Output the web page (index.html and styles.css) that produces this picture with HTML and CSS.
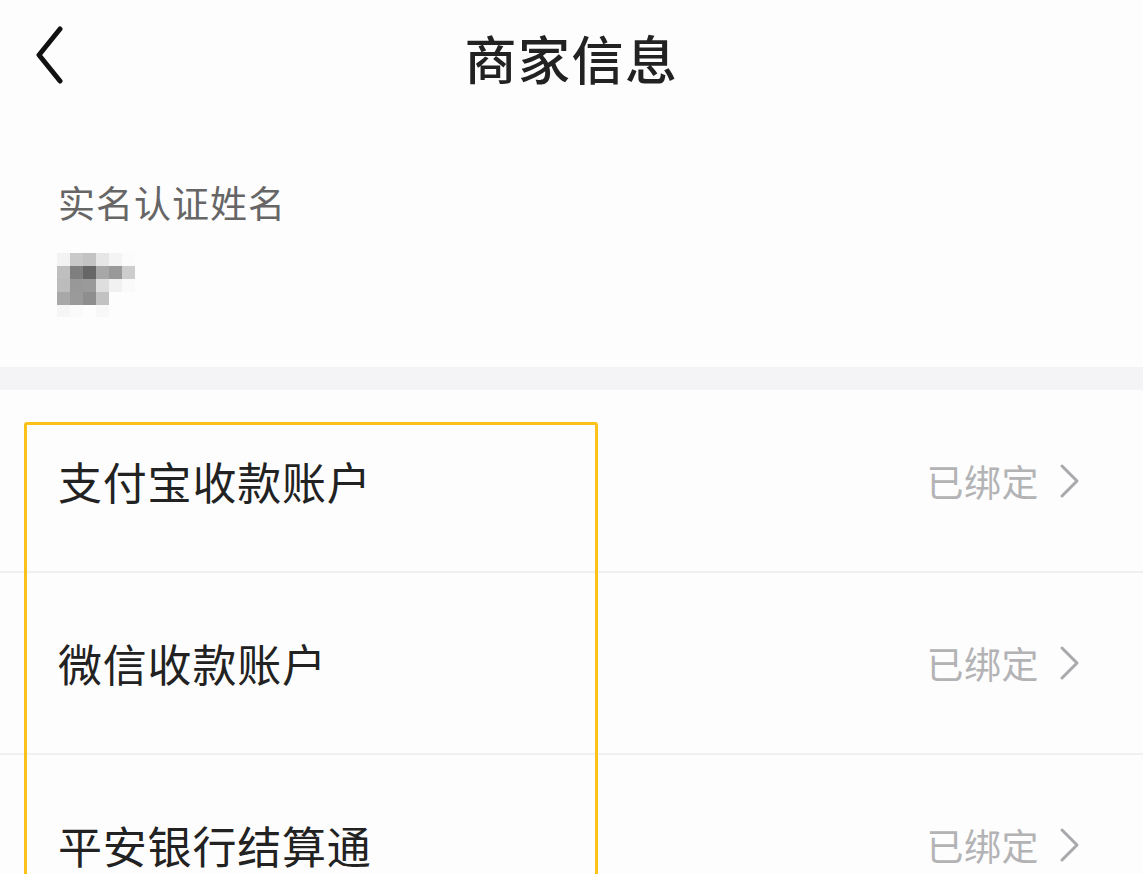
FILE: index.html
```html
<!DOCTYPE html>
<html lang="zh-CN">
<head>
<meta charset="utf-8">
<title>商家信息</title>
<link rel="stylesheet" href="styles.css">
</head>
<body>
<div class="page">
  <header class="nav">
    <svg class="back" width="32" height="60" viewBox="0 0 32 60"><path d="M26 3 L5 29 L26 55" fill="none" stroke="#111" stroke-width="5" stroke-linecap="round" stroke-linejoin="round"/></svg>
    <h1 class="title">商家信息</h1>
  </header>

  <section class="info">
    <div class="info-label">实名认证姓名</div>
    <svg class="blur" width="90" height="64" viewBox="0 0 90 64">
      <rect x="0" y="0" width="13" height="13" fill="#f3f3f3"/>
      <rect x="13" y="0" width="13" height="13" fill="#c9c9c9"/>
      <rect x="26" y="0" width="13" height="13" fill="#c3c3c3"/>
      <rect x="39" y="0" width="13" height="13" fill="#e6e6e6"/>
      <rect x="52" y="0" width="13" height="13" fill="#f4f4f4"/>
      <rect x="65" y="0" width="13" height="13" fill="#fbfbfb"/>
      <rect x="0" y="13" width="13" height="13" fill="#bfbfbf"/>
      <rect x="13" y="13" width="13" height="13" fill="#7f7f7f"/>
      <rect x="26" y="13" width="13" height="13" fill="#666666"/>
      <rect x="39" y="13" width="13" height="13" fill="#a7a7a7"/>
      <rect x="52" y="13" width="13" height="13" fill="#999999"/>
      <rect x="65" y="13" width="13" height="13" fill="#cdcdcd"/>
      <rect x="0" y="26" width="13" height="13" fill="#bcbcbc"/>
      <rect x="13" y="26" width="13" height="13" fill="#989898"/>
      <rect x="26" y="26" width="13" height="13" fill="#9a9a9a"/>
      <rect x="39" y="26" width="13" height="13" fill="#dedede"/>
      <rect x="52" y="26" width="13" height="13" fill="#f1f1f1"/>
      <rect x="65" y="26" width="13" height="13" fill="#fafafa"/>
      <rect x="0" y="39" width="13" height="13" fill="#a8a8a8"/>
      <rect x="13" y="39" width="13" height="13" fill="#9a9a9a"/>
      <rect x="26" y="39" width="13" height="13" fill="#8e8e8e"/>
      <rect x="39" y="39" width="13" height="13" fill="#c2c2c2"/>
      <rect x="0" y="52" width="13" height="12" fill="#f6f6f6"/>
      <rect x="13" y="52" width="13" height="12" fill="#fafafa"/>
      <rect x="39" y="52" width="13" height="12" fill="#f8f8f8"/>
    </svg>
  </section>

  <div class="band"></div>

  <ul class="list">
    <li class="row">
      <span class="row-label">支付宝收款账户</span>
      <span class="row-status">已绑定</span>
      <svg class="chev" width="22" height="36" viewBox="0 0 22 36"><path d="M3 3 L18 18 L3 33" fill="none" stroke="#a9a9ad" stroke-width="3" stroke-linecap="round" stroke-linejoin="round"/></svg>
    </li>
    <li class="row">
      <span class="row-label">微信收款账户</span>
      <span class="row-status">已绑定</span>
      <svg class="chev" width="22" height="36" viewBox="0 0 22 36"><path d="M3 3 L18 18 L3 33" fill="none" stroke="#a9a9ad" stroke-width="3" stroke-linecap="round" stroke-linejoin="round"/></svg>
    </li>
    <li class="row row-last">
      <span class="row-label">平安银行结算通</span>
      <span class="row-status">已绑定</span>
      <svg class="chev" width="22" height="36" viewBox="0 0 22 36"><path d="M3 3 L18 18 L3 33" fill="none" stroke="#a9a9ad" stroke-width="3" stroke-linecap="round" stroke-linejoin="round"/></svg>
    </li>
  </ul>

  <div class="highlight"></div>
</div>
</body>
</html>
```

FILE: styles.css
```css
* { box-sizing: border-box; }

html, body {
  margin: 0;
  padding: 0;
  background: #ffffff;
}

body {
  font-family: "Noto Sans CJK SC", "Noto Sans", sans-serif;
  color: #222222;
  overflow: hidden;
}

.page {
  position: relative;
  width: 1143px;
  height: 874px;
  overflow: hidden;
  background: #fdfdfd;
}

.nav {
  position: relative;
  height: 116px;
  display: flex;
  align-items: center;
  justify-content: center;
}

.back {
  position: absolute;
  left: 34px;
  top: 26px;
}

.title {
  margin: 0;
  font-size: 52px;
  font-weight: 500;
  line-height: 60px;
  color: #222222;
  letter-spacing: 1.5px;
}

.info {
  padding: 64px 0 0 58px;
  height: 251px;
  display: flex;
  flex-direction: column;
}

.info-label {
  font-size: 37px;
  line-height: 44px;
  color: #666666;
  letter-spacing: 1px;
}

.blur {
  display: block;
  margin-top: 29px;
  margin-left: -1px;
}

.band {
  height: 23px;
  background: #f4f4f7;
}

.list {
  list-style: none;
  margin: 0;
  padding: 0;
}

.row {
  height: 182px;
  display: flex;
  align-items: center;
  padding: 0 62px 0 58px;
  border-bottom: 2px solid #f0f0f2;
}

.row:first-child {
  height: 183px;
}

.row-last {
  height: 119px;
  align-items: flex-start;
  padding-top: 66px;
  border-bottom: 0;
}

.row-label {
  flex: 1;
  font-size: 44px;
  line-height: 48px;
  color: #222222;
  letter-spacing: 0.8px;
}

.row-status {
  font-size: 37px;
  line-height: 44px;
  color: #b3b3b6;
  margin-right: 20px;
  letter-spacing: 0.5px;
}

.row-last .row-status {
  margin-top: 2px;
}

.row-last .chev {
  margin-top: 6px;
}

.chev {
  display: block;
}

.highlight {
  position: absolute;
  left: 24px;
  top: 422px;
  width: 574px;
  height: 600px;
  border: 3px solid #fdc21a;
  border-radius: 3px;
  pointer-events: none;
}
```
